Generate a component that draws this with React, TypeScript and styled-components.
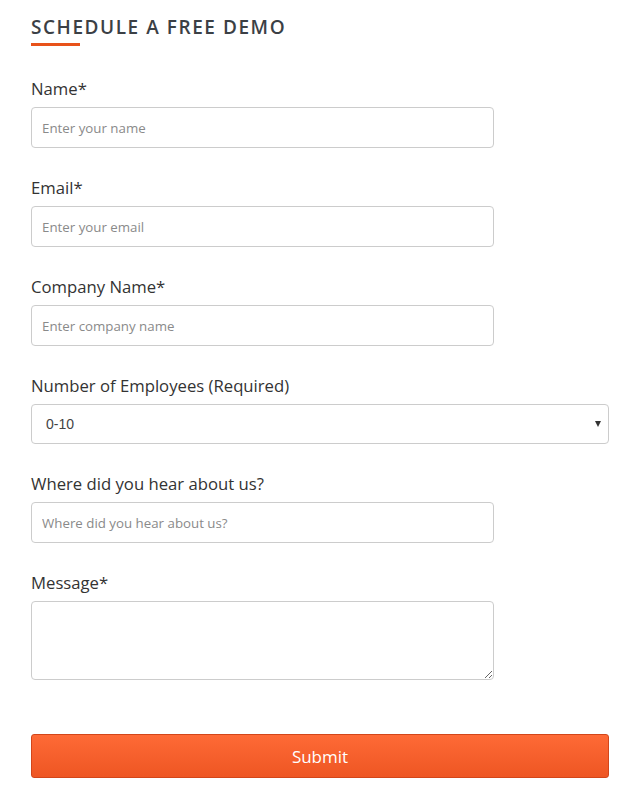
import styled, { createGlobalStyle } from 'styled-components';

const GlobalStyle = createGlobalStyle`
  html, body {
    margin: 0;
    padding: 0;
    background: #ffffff;
  }
  body {
    font-family: 'Open Sans', 'Noto Sans', sans-serif;
    color: #333333;
  }
`;

type Field = {
  label: string;
  placeholder: string;
};

const fields: Field[] = [
  { label: 'Name*', placeholder: 'Enter your name' },
  { label: 'Email*', placeholder: 'Enter your email' },
  { label: 'Company Name*', placeholder: 'Enter company name' },
];

const employeeOptions = ['0-10', '11-50', '51-200', '201-500', '500+'];

export default function App() {
  return (
    <>
      <GlobalStyle />
      <Page>
        <Heading>SCHEDULE A FREE DEMO</Heading>
        <HeadingBar />

        <Form onSubmit={(e) => e.preventDefault()}>
          {fields.map((f) => (
            <Group key={f.label}>
              <Label>{f.label}</Label>
              <TextInput type="text" placeholder={f.placeholder} />
            </Group>
          ))}

          <Group>
            <Label>Number of Employees (Required)</Label>
            <SelectWrap>
              <Select defaultValue="0-10">
                {employeeOptions.map((o) => (
                  <option key={o} value={o}>
                    {o}
                  </option>
                ))}
              </Select>
              <Caret />
            </SelectWrap>
          </Group>

          <Group>
            <Label>Where did you hear about us?</Label>
            <TextInput type="text" placeholder="Where did you hear about us?" />
          </Group>

          <Group>
            <Label>Message*</Label>
            <TextArea />
          </Group>

          <SubmitButton type="submit">Submit</SubmitButton>
        </Form>
      </Page>
    </>
  );
}

const Page = styled.div`
  width: 578px;
  padding: 14px 0 18px 31px;
`;

const Heading = styled.h2`
  margin: 0;
  font-size: 19px;
  line-height: 26px;
  font-weight: 600;
  letter-spacing: 1.55px;
  color: #3b4045;
`;

const HeadingBar = styled.div`
  width: 49px;
  height: 3px;
  margin-top: 3px;
  background: #e8521a;
`;

const Form = styled.form`
  display: flex;
  flex-direction: column;
  margin-top: 31px;
`;

const Group = styled.div`
  display: flex;
  flex-direction: column;
  margin-bottom: 28px;
`;

const Label = styled.label`
  font-size: 16.7px;
  line-height: 24px;
  color: #333333;
  margin-bottom: 6px;
`;

const TextInput = styled.input`
  box-sizing: border-box;
  width: 463px;
  height: 41px;
  padding: 0 10px;
  border: 1px solid #cccccc;
  border-radius: 4px;
  font-family: 'Open Sans', 'Noto Sans', sans-serif;
  font-size: 13.3px;
  color: #555555;
  outline: none;

  &::placeholder {
    color: #8a8a8a;
  }
`;

const SelectWrap = styled.div`
  position: relative;
  width: 578px;
`;

const Select = styled.select`
  box-sizing: border-box;
  width: 100%;
  height: 40px;
  padding: 0 14px;
  border: 1px solid #cccccc;
  border-radius: 4px;
  background: #ffffff;
  appearance: none;
  font-family: 'Liberation Sans', Arial, sans-serif;
  font-size: 14px;
  color: #444444;
  outline: none;
`;

const Caret = styled.span`
  position: absolute;
  right: 8px;
  top: 17px;
  width: 0;
  height: 0;
  border-left: 3.5px solid transparent;
  border-right: 3.5px solid transparent;
  border-top: 6px solid #333333;
  pointer-events: none;
`;

const TextArea = styled.textarea`
  box-sizing: border-box;
  width: 463px;
  height: 79px;
  padding: 8px 10px;
  border: 1px solid #cccccc;
  border-radius: 4px;
  font-family: 'Open Sans', 'Noto Sans', sans-serif;
  font-size: 14px;
  outline: none;
`;

const SubmitButton = styled.button`
  box-sizing: border-box;
  width: 578px;
  height: 44px;
  margin-top: 26px;
  border: 1px solid #d2461a;
  border-radius: 3px;
  background: linear-gradient(to bottom, #fe6a36, #ee5623);
  color: #ffffff;
  font-family: 'Open Sans', 'Noto Sans', sans-serif;
  font-size: 17px;
  cursor: pointer;
`;
